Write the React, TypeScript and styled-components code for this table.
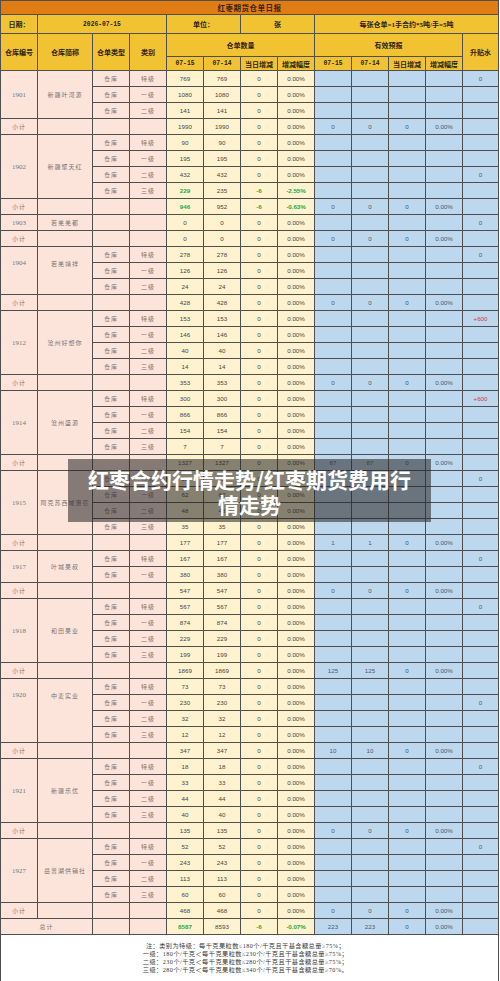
import React from 'react';
import styled, { createGlobalStyle, css } from 'styled-components';

const GlobalStyle = createGlobalStyle`
  html, body {
    margin: 0;
    padding: 0;
    background: #ffffff;
  }
`;

const Page = styled.div`
  position: relative;
  width: 500px;
`;

const Sheet = styled.table`
  width: 499px;
  border-collapse: collapse;
  table-layout: fixed;
  border: 1px solid #4f4f4f;
`;

const Row = styled.tr<{ $h: number }>`
  height: ${(p) => p.$h}px;
`;

const cellBase = css`
  border: 1px solid #4f4f4f;
  padding: 0;
  text-align: center;
  vertical-align: middle;
  overflow: hidden;
  white-space: nowrap;
`;

const TitleCell = styled.td`
  ${cellBase};
  background: #e07c14;
  color: #3a2410;
  font-family: 'Liberation Serif', 'Noto Sans CJK SC', serif;
  font-weight: 700;
  font-size: 7.5px;
  letter-spacing: 0.5px;
`;

const HeadCell = styled.td<{ $mono?: boolean }>`
  ${cellBase};
  background: #f1c232;
  color: #2b2415;
  font-family: ${(p) =>
    p.$mono
      ? "'Liberation Mono', 'Noto Sans CJK SC', monospace"
      : "'Liberation Serif', 'Noto Sans CJK SC', serif"};
  font-weight: 700;
  font-size: ${(p) => (p.$mono ? '6.3px' : '7px')};
`;

const PinkCell = styled.td<{ $top?: boolean; $serif?: boolean }>`
  ${cellBase};
  background: #fce4db;
  color: #7d7472;
  font-family: ${(p) =>
    p.$serif
      ? "'Liberation Serif', 'Noto Sans CJK SC', serif"
      : "'Noto Sans CJK SC', sans-serif"};
  font-size: ${(p) => (p.$serif ? '7px' : '6px')};
  letter-spacing: ${(p) => (p.$serif ? '0' : '1px')};
  ${(p) =>
    p.$top &&
    css`
      vertical-align: top;
      padding-top: 12px;
    `}
`;

const CreamCell = styled.td<{ $down?: boolean }>`
  ${cellBase};
  background: #fff2cf;
  color: ${(p) => (p.$down ? '#26a843' : '#464646')};
  font-weight: ${(p) => (p.$down ? 700 : 400)};
  font-family: 'Liberation Sans', Arial, sans-serif;
  font-size: 6.2px;
`;

const BlueCell = styled.td<{ $up?: boolean }>`
  ${cellBase};
  background: #bdd7ee;
  color: ${(p) => (p.$up ? '#e0303f' : '#555a60')};
  font-family: 'Liberation Sans', Arial, sans-serif;
  font-size: 6.2px;
`;

const NoteCell = styled.td`
  border: 1px solid #4f4f4f;
  background: #ffffff;
  height: 44px;
  padding: 7px 8px 0 0;
  vertical-align: top;
  text-align: center;
  color: #3a3a3a;
  font-family: 'Liberation Serif', 'Noto Sans CJK SC', serif;
  font-size: 6.2px;
  letter-spacing: 0.45px;
  line-height: 8px;
`;

const NoteLine = styled.div`
  white-space: nowrap;
`;

const Banner = styled.div`
  position: absolute;
  left: 68px;
  top: 459px;
  width: 363px;
  height: 63px;
  box-sizing: border-box;
  padding-top: 8px;
  background: rgba(40, 40, 40, 0.56);
  color: #ffffff;
  font-family: 'Noto Sans CJK SC', sans-serif;
  font-weight: 700;
  font-size: 21px;
  line-height: 25px;
  text-align: center;
  white-space: nowrap;
`;

type Item = [string, string, number, number, number, string, string?];

interface Group {
  id: string;
  name: string;
  rows: Item[];
  sub: [number, number, number, string];
  fut: [number, number, number, string];
  top?: boolean;
}

const groups: Group[] = [
  {
    id: '1901',
    name: '新疆叶河源',
    rows: [
      ['仓库', '特级', 769, 769, 0, '0.00%', '0'],
      ['仓库', '一级', 1080, 1080, 0, '0.00%'],
      ['仓库', '二级', 141, 141, 0, '0.00%'],
    ],
    sub: [1990, 1990, 0, '0.00%'],
    fut: [0, 0, 0, '0.00%'],
  },
  {
    id: '1902',
    name: '新疆聚天红',
    rows: [
      ['仓库', '特级', 90, 90, 0, '0.00%'],
      ['仓库', '一级', 195, 195, 0, '0.00%'],
      ['仓库', '二级', 432, 432, 0, '0.00%', '0'],
      ['仓库', '三级', 229, 235, -6, '-2.55%'],
    ],
    sub: [946, 952, -6, '-0.63%'],
    fut: [0, 0, 0, '0.00%'],
  },
  {
    id: '1903',
    name: '若羌羌都',
    rows: [['', '', 0, 0, 0, '0.00%', '0']],
    sub: [0, 0, 0, '0.00%'],
    fut: [0, 0, 0, '0.00%'],
  },
  {
    id: '1904',
    name: '若羌靖祥',
    top: true,
    rows: [
      ['仓库', '特级', 278, 278, 0, '0.00%', '0'],
      ['仓库', '一级', 126, 126, 0, '0.00%'],
      ['仓库', '二级', 24, 24, 0, '0.00%'],
    ],
    sub: [428, 428, 0, '0.00%'],
    fut: [0, 0, 0, '0.00%'],
  },
  {
    id: '1912',
    name: '沧州好想你',
    rows: [
      ['仓库', '特级', 153, 153, 0, '0.00%', '+600'],
      ['仓库', '一级', 146, 146, 0, '0.00%'],
      ['仓库', '二级', 40, 40, 0, '0.00%'],
      ['仓库', '三级', 14, 14, 0, '0.00%'],
    ],
    sub: [353, 353, 0, '0.00%'],
    fut: [0, 0, 0, '0.00%'],
  },
  {
    id: '1914',
    name: '沧州盛源',
    rows: [
      ['仓库', '特级', 300, 300, 0, '0.00%', '+600'],
      ['仓库', '一级', 866, 866, 0, '0.00%'],
      ['仓库', '二级', 154, 154, 0, '0.00%'],
      ['仓库', '三级', 7, 7, 0, '0.00%'],
    ],
    sub: [1327, 1327, 0, '0.00%'],
    fut: [87, 87, 0, '0.00%'],
  },
  {
    id: '1915',
    name: '阿克苏西域惠农',
    rows: [
      ['仓库', '特级', 32, 32, 0, '0.00%', '0'],
      ['仓库', '一级', 62, 62, 0, '0.00%'],
      ['仓库', '二级', 48, 48, 0, '0.00%'],
      ['仓库', '三级', 35, 35, 0, '0.00%'],
    ],
    sub: [177, 177, 0, '0.00%'],
    fut: [1, 1, 0, '0.00%'],
  },
  {
    id: '1917',
    name: '叶城果叔',
    rows: [
      ['仓库', '特级', 167, 167, 0, '0.00%', '0'],
      ['仓库', '一级', 380, 380, 0, '0.00%'],
    ],
    sub: [547, 547, 0, '0.00%'],
    fut: [0, 0, 0, '0.00%'],
  },
  {
    id: '1918',
    name: '和田果业',
    rows: [
      ['仓库', '特级', 567, 567, 0, '0.00%', '0'],
      ['仓库', '一级', 874, 874, 0, '0.00%'],
      ['仓库', '二级', 229, 229, 0, '0.00%'],
      ['仓库', '三级', 199, 199, 0, '0.00%'],
    ],
    sub: [1869, 1869, 0, '0.00%'],
    fut: [125, 125, 0, '0.00%'],
  },
  {
    id: '1920',
    name: '中麦实业',
    top: true,
    rows: [
      ['仓库', '特级', 73, 73, 0, '0.00%'],
      ['仓库', '一级', 230, 230, 0, '0.00%', '0'],
      ['仓库', '二级', 32, 32, 0, '0.00%'],
      ['仓库', '三级', 12, 12, 0, '0.00%'],
    ],
    sub: [347, 347, 0, '0.00%'],
    fut: [10, 10, 0, '0.00%'],
  },
  {
    id: '1921',
    name: '新疆乐优',
    rows: [
      ['仓库', '特级', 18, 18, 0, '0.00%', '0'],
      ['仓库', '一级', 33, 33, 0, '0.00%'],
      ['仓库', '二级', 44, 44, 0, '0.00%'],
      ['仓库', '三级', 40, 40, 0, '0.00%'],
    ],
    sub: [135, 135, 0, '0.00%'],
    fut: [0, 0, 0, '0.00%'],
  },
  {
    id: '1927',
    name: '岳普湖供销社',
    rows: [
      ['仓库', '特级', 52, 52, 0, '0.00%', '0'],
      ['仓库', '一级', 243, 243, 0, '0.00%'],
      ['仓库', '二级', 113, 113, 0, '0.00%'],
      ['仓库', '三级', 60, 60, 0, '0.00%'],
    ],
    sub: [468, 468, 0, '0.00%'],
    fut: [0, 0, 0, '0.00%'],
  },
];

const colWidths = [37, 55, 37, 37, 37, 37, 37, 37, 37, 37, 37, 37, 36];

const notes = [
  '注：类别为特级：每千克果粒数≤180个/千克且干基含糖总量≥75%；',
  '一级：180个/千克＜每千克果粒数≤230个/千克且干基含糖总量≥75%；',
  '二级：230个/千克＜每千克果粒数≤280个/千克且干基含糖总量≥75%；',
  '三级：280个/千克＜每千克果粒数≤340个/千克且干基含糖总量≥70%。',
];

const App: React.FC = () => {
  return (
    <Page>
      <GlobalStyle />
      <Sheet>
        <colgroup>
          {colWidths.map((w, i) => (
            <col key={i} style={{ width: w }} />
          ))}
        </colgroup>
        <tbody>
          <Row $h={14}>
            <TitleCell colSpan={13}>红枣期货仓单日报</TitleCell>
          </Row>
          <Row $h={19}>
            <HeadCell>日期：</HeadCell>
            <HeadCell colSpan={3} $mono>
              2026-07-15
            </HeadCell>
            <HeadCell colSpan={2}>单位：</HeadCell>
            <HeadCell colSpan={2}>张</HeadCell>
            <HeadCell colSpan={5}>每张仓单=1手合约*5吨/手=5吨</HeadCell>
          </Row>
          <Row $h={23}>
            <HeadCell rowSpan={2}>仓库编号</HeadCell>
            <HeadCell rowSpan={2}>仓库简称</HeadCell>
            <HeadCell rowSpan={2}>仓单类型</HeadCell>
            <HeadCell rowSpan={2}>类别</HeadCell>
            <HeadCell colSpan={4}>仓单数量</HeadCell>
            <HeadCell colSpan={4}>有效预报</HeadCell>
            <HeadCell rowSpan={2}>升贴水</HeadCell>
          </Row>
          <Row $h={14}>
            <HeadCell $mono>07-15</HeadCell>
            <HeadCell $mono>07-14</HeadCell>
            <HeadCell>当日增减</HeadCell>
            <HeadCell>增减幅度</HeadCell>
            <HeadCell $mono>07-15</HeadCell>
            <HeadCell $mono>07-14</HeadCell>
            <HeadCell>当日增减</HeadCell>
            <HeadCell>增减幅度</HeadCell>
          </Row>

          {groups.map((g) => (
            <React.Fragment key={g.id}>
              {g.rows.map((r, i) => {
                const down = r[4] < 0;
                const prem = r[6] ?? '';
                return (
                  <Row $h={16} key={i}>
                    {i === 0 && (
                      <PinkCell rowSpan={g.rows.length} $serif $top={g.top}>
                        {g.id}
                      </PinkCell>
                    )}
                    {i === 0 && (
                      <PinkCell rowSpan={g.rows.length} $top={g.top}>
                        {g.name}
                      </PinkCell>
                    )}
                    <PinkCell>{r[0]}</PinkCell>
                    <PinkCell>{r[1]}</PinkCell>
                    <CreamCell $down={down}>{r[2]}</CreamCell>
                    <CreamCell>{r[3]}</CreamCell>
                    <CreamCell $down={down}>{r[4]}</CreamCell>
                    <CreamCell $down={down}>{r[5]}</CreamCell>
                    <BlueCell />
                    <BlueCell />
                    <BlueCell />
                    <BlueCell />
                    <BlueCell $up={prem.startsWith('+')}>{prem}</BlueCell>
                  </Row>
                );
              })}
              <Row $h={16}>
                <PinkCell>小计</PinkCell>
                <PinkCell />
                <PinkCell />
                <PinkCell />
                <CreamCell $down={g.sub[2] < 0}>{g.sub[0]}</CreamCell>
                <CreamCell>{g.sub[1]}</CreamCell>
                <CreamCell $down={g.sub[2] < 0}>{g.sub[2]}</CreamCell>
                <CreamCell $down={g.sub[2] < 0}>{g.sub[3]}</CreamCell>
                <BlueCell>{g.fut[0]}</BlueCell>
                <BlueCell>{g.fut[1]}</BlueCell>
                <BlueCell>{g.fut[2]}</BlueCell>
                <BlueCell>{g.fut[3]}</BlueCell>
                <BlueCell />
              </Row>
            </React.Fragment>
          ))}

          <Row $h={16}>
            <PinkCell colSpan={2}>总计</PinkCell>
            <PinkCell />
            <PinkCell />
            <CreamCell $down>8587</CreamCell>
            <CreamCell>8593</CreamCell>
            <CreamCell $down>-6</CreamCell>
            <CreamCell $down>-0.07%</CreamCell>
            <BlueCell>223</BlueCell>
            <BlueCell>223</BlueCell>
            <BlueCell>0</BlueCell>
            <BlueCell>0.00%</BlueCell>
            <BlueCell />
          </Row>
          <tr>
            <NoteCell colSpan={13}>
              {notes.map((n) => (
                <NoteLine key={n}>{n}</NoteLine>
              ))}
            </NoteCell>
          </tr>
        </tbody>
      </Sheet>
      <Banner>
        红枣合约行情走势/红枣期货费用行
        <br />
        情走势
      </Banner>
    </Page>
  );
};

export default App;
